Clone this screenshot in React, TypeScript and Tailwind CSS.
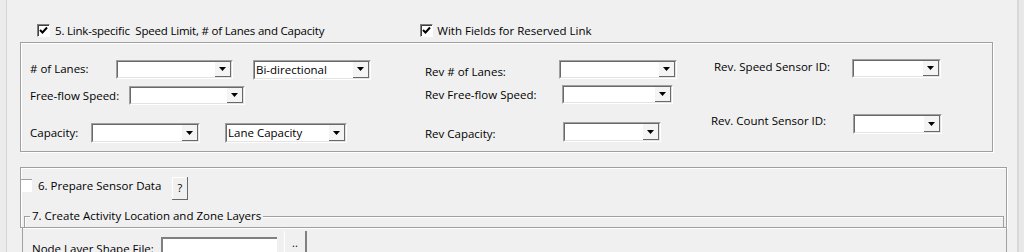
import React from "react";

const font = { fontFamily: '"Open Sans", "Noto Sans", Arial, sans-serif' };

function Combo({ w, h = 19, text, className = "" }: { w: number; h?: number; text?: string; className?: string }) {
  return (
    <div
      className={`flex shrink-0 border-t border-l border-t-[#a0a0a0] border-l-[#a0a0a0] border-b border-r border-b-[#ffffff] border-r-[#ffffff] ${className}`}
      style={{ width: w, height: h }}
    >
      <div className="flex flex-1 items-stretch border-t border-l border-t-[#696969] border-l-[#696969] border-b border-r border-b-[#e3e3e3] border-r-[#e3e3e3] bg-white">
        <div className="flex flex-1 items-center pl-[1px] text-[11.5px] leading-none text-black">{text}</div>
        <div className="flex w-[16px] items-center justify-center border-r border-b border-r-[#696969] border-b-[#696969] bg-[#f4f4f4]">
          <svg width="7" height="4" viewBox="0 0 7 4">
            <path d="M0 0H7L3.5 4Z" fill="#000" />
          </svg>
        </div>
      </div>
    </div>
  );
}

function Check({ checked = true }: { checked?: boolean }) {
  return (
    <div className="flex h-[13px] w-[13px] shrink-0 items-center justify-center border-t border-l border-t-[#808080] border-l-[#808080] border-b border-r border-b-[#ffffff] border-r-[#ffffff] bg-white shadow-[inset_1px_1px_0_#404040]">
      {checked && (
        <svg width="9" height="9" viewBox="0 0 9 9">
          <path d="M1 4 L3.5 6.5 L8 1.5" stroke="#000" strokeWidth="2" fill="none" />
        </svg>
      )}
    </div>
  );
}

function Label({ children, w }: { children: React.ReactNode; w: number }) {
  return (
    <div className="shrink-0 whitespace-nowrap text-[11.5px] leading-none text-black" style={{ width: w }}>
      {children}
    </div>
  );
}

export default function App() {
  return (
    <div className="relative flex h-[252px] w-[1024px] overflow-hidden bg-[#f0f0f0] text-black" style={font}>
      {/* left edge */}
      <div className="w-[7px] shrink-0 border-r border-r-[#d4d4d4] bg-[#ebebeb]" />
      <div className="flex w-[1010px] shrink-0 flex-col">
        {/* checkbox row */}
        <div className="flex h-[42px] shrink-0 items-start pt-[24px]">
          <div className="ml-[30px]"><Check /></div>
          <div className="ml-[5px] mt-[-1px] whitespace-nowrap text-[11.5px] leading-[16px] tracking-[-0.2px]">5. Link-specific&nbsp; Speed Limit, # of Lanes and Capacity</div>
          <div className="ml-[96px]"><Check /></div>
          <div className="ml-[4px] mt-[-1px] whitespace-nowrap text-[11.5px] leading-[16px]">With Fields for Reserved Link</div>
        </div>
        {/* group 5 */}
        <div className="ml-[13px] flex h-[110px] w-[973px] shrink-0 border border-[#a0a0a0] shadow-[inset_1px_1px_0_#fff,1px_1px_0_#fff]">
          {/* left column */}
          <div className="flex w-[404px] flex-col pl-[9px] pt-[17px]">
            <div className="flex h-[19px] items-center">
              <Label w={86}><span className="relative top-[-1px]"># of Lanes:</span></Label>
              <Combo w={117} />
              <Combo w={118} h={20} className="ml-[20px]" text="Bi-directional" />
            </div>
            <div className="mt-[7px] flex h-[19px] items-center">
              <Label w={99}>Free-flow Speed:</Label>
              <Combo w={116} />
            </div>
            <div className="mt-[18px] flex h-[20px] items-center">
              <Label w={61}>Capacity:</Label>
              <Combo w={109} h={20} />
              <Combo w={122} h={20} className="ml-[25px]" text="Lane Capacity" />
            </div>
          </div>
          {/* middle column */}
          <div className="flex w-[286px] flex-col pt-[17px]">
            <div className="flex h-[19px] items-center">
              <Label w={134}><span className="relative top-[2px]">Rev # of Lanes:</span></Label>
              <Combo w={118} />
            </div>
            <div className="mt-[6px] flex h-[19px] items-center">
              <Label w={137}>Rev Free-flow Speed:</Label>
              <Combo w={111} />
            </div>
            <div className="mt-[18px] flex h-[20px] items-center">
              <Label w={138}><span className="relative top-[2px]">Rev Capacity:</span></Label>
              <Combo w={98} h={20} />
            </div>
          </div>
          {/* right column */}
          <div className="flex flex-col pt-[16px]">
            <div className="flex h-[19px] items-center">
              <Label w={141}><span className="relative top-[-2px] left-[3px]">Rev. Speed Sensor ID:</span></Label>
              <Combo w={89} />
            </div>
            <div className="mt-[36px] flex h-[20px] items-center">
              <Label w={142}><span className="relative top-[-3px]">Rev. Count Sensor ID:</span></Label>
              <Combo w={89} h={20} />
            </div>
          </div>
        </div>
        {/* panel 6 */}
        <div className="ml-[13px] mt-[15px] flex h-[61px] w-[987px] shrink-0 flex-col border border-[#a0a0a0] shadow-[inset_1px_1px_0_#fff,1px_1px_0_#fff]">
          <div className="flex h-[48px] shrink-0 items-start pt-[9px]">
            <div className="mt-[2px] h-[13px] w-[11px] border-t border-t-[#a0a0a0] bg-white" />
            <div className="ml-[6px] mt-[1px] whitespace-nowrap text-[11.5px] leading-[16px]">6. Prepare Sensor Data</div>
            <div className="ml-[11px] flex h-[23px] w-[16px] items-center justify-center border-r border-b border-r-[#696969] border-b-[#696969] bg-[#f0f0f0] text-[11px] shadow-[inset_1px_1px_0_#fff]">?</div>
          </div>
          <div className="relative ml-[3px] mr-[2px] flex-1 border-t border-l border-r border-[#a0a0a0] shadow-[inset_1px_1px_0_#fff]">
            <div className="absolute left-[5px] top-[-9px] bg-[#f0f0f0] px-[2px] whitespace-nowrap text-[11.5px] leading-[16px]">7. Create Activity Location and Zone Layers</div>
          </div>
        </div>
        {/* panel 7 content */}
        <div className="ml-[15px] flex h-[30px] w-[985px] shrink-0 items-start border-l border-r border-[#a0a0a0]">
          <div className="ml-[9px] mt-[13px] w-[129px] shrink-0 whitespace-nowrap text-[11.5px] leading-[16px]">Node Layer Shape File:</div>
          <div className="mt-[9px] h-[20px] w-[116px] shrink-0 border-t-2 border-l-2 border-t-[#808080] border-l-[#808080] bg-white" />
          <div className="ml-[7px] mt-[3px] flex h-[26px] w-[23px] shrink-0 items-start justify-center border-l border-l-[#fff] border-r-2 border-r-[#808080] bg-[#f0f0f0] pt-[6px] text-[11px] leading-none">..</div>
        </div>
      </div>
      {/* right scrollbar edge */}
      <div className="w-[7px] shrink-0 border-l-2 border-l-[#d8d8d8] bg-[#e8e8e8]" />
    </div>
  );
}
